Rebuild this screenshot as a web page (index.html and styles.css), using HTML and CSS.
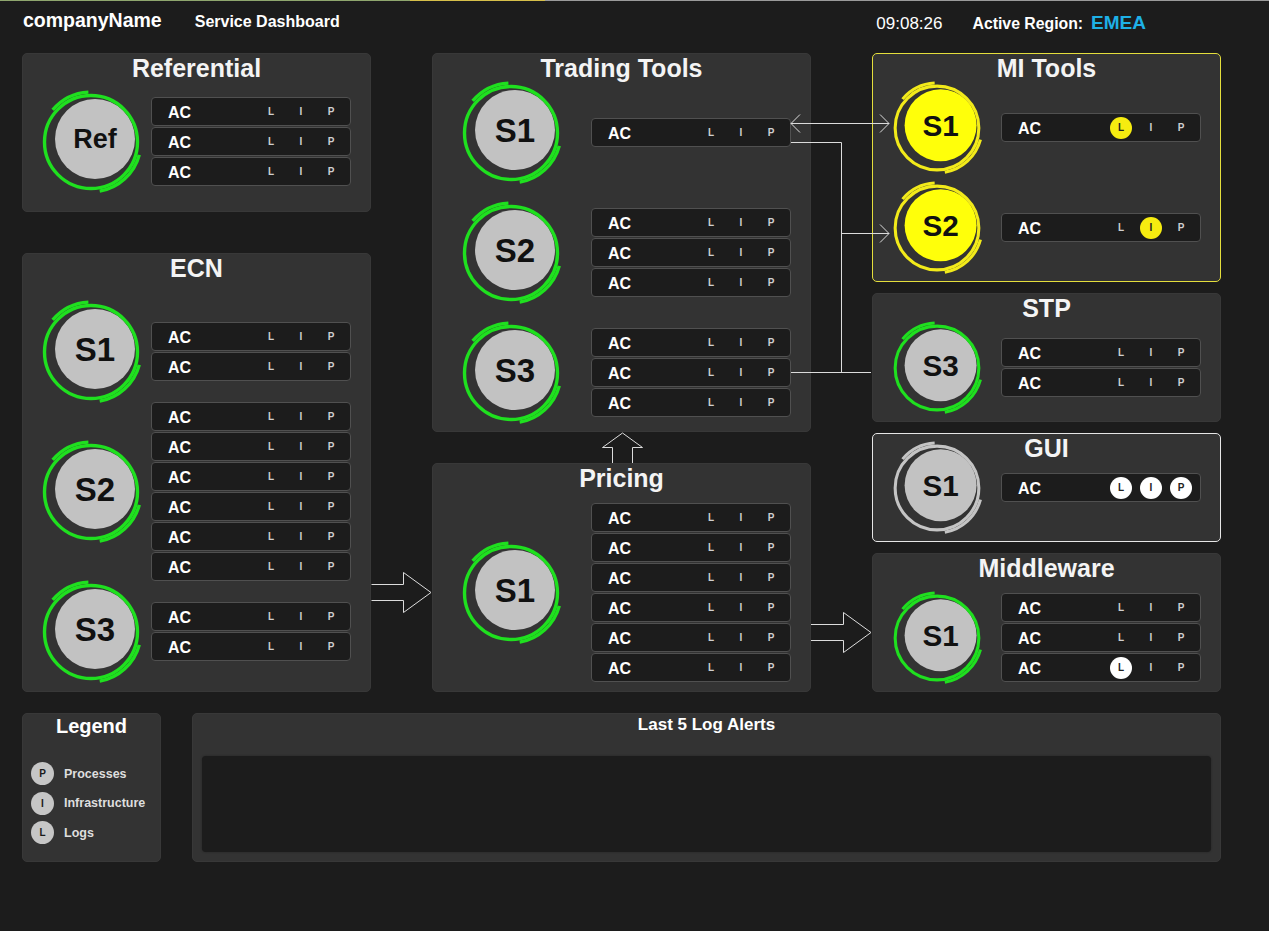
FILE: index.html
```html
<!DOCTYPE html>
<html>
<head>
<meta charset="utf-8">
<title>Service Dashboard</title>
<link rel="stylesheet" href="styles.css">
</head>
<body>
<header class="topbar">
  <div class="left-head">
    <span class="brand">companyName</span>
    <span class="subtitle">Service Dashboard</span>
  </div>
  <div class="right-head">
    <span class="clock">09:08:26</span>
    <span class="region">Active Region:<span class="region-name">EMEA</span></span>
  </div>
</header>

<main class="board">
  <div class="col col-1">
    <section class="panel p-ref">
      <h2 class="ptitle">Referential</h2>
      <div class="svcs">
        <div class="svc">
          <div class="ring-zone"><svg class="ring green lg" viewBox="0 0 100 100"><circle class="core" cx="54" cy="47" r="40"/><circle class="arc" cx="50" cy="50" r="46.5"/><path class="arc" d="M47.4 0.1 A50 50 0 0 0 11.7 17.9"/><path class="arc" d="M98.3 62.9 A50 50 0 0 1 58.7 99.2"/><text class="lbl small" x="54" y="56">Ref</text></svg></div>
          <div class="rows">
            <div class="row"><span class="ac">AC</span><span class="ind">L</span><span class="ind">I</span><span class="ind">P</span></div>
            <div class="row"><span class="ac">AC</span><span class="ind">L</span><span class="ind">I</span><span class="ind">P</span></div>
            <div class="row"><span class="ac">AC</span><span class="ind">L</span><span class="ind">I</span><span class="ind">P</span></div>
          </div>
        </div>
      </div>
    </section>
    <section class="panel p-ecn">
      <h2 class="ptitle">ECN</h2>
      <div class="svcs">
        <div class="svc">
          <div class="ring-zone"><svg class="ring green lg" viewBox="0 0 100 100"><circle class="core" cx="54" cy="47" r="40"/><circle class="arc" cx="50" cy="50" r="46.5"/><path class="arc" d="M47.4 0.1 A50 50 0 0 0 11.7 17.9"/><path class="arc" d="M98.3 62.9 A50 50 0 0 1 58.7 99.2"/><text class="lbl" x="54" y="59">S1</text></svg></div>
          <div class="rows">
            <div class="row"><span class="ac">AC</span><span class="ind">L</span><span class="ind">I</span><span class="ind">P</span></div>
            <div class="row"><span class="ac">AC</span><span class="ind">L</span><span class="ind">I</span><span class="ind">P</span></div>
          </div>
        </div>
        <div class="svc">
          <div class="ring-zone"><svg class="ring green lg" viewBox="0 0 100 100"><circle class="core" cx="54" cy="47" r="40"/><circle class="arc" cx="50" cy="50" r="46.5"/><path class="arc" d="M47.4 0.1 A50 50 0 0 0 11.7 17.9"/><path class="arc" d="M98.3 62.9 A50 50 0 0 1 58.7 99.2"/><text class="lbl" x="54" y="59">S2</text></svg></div>
          <div class="rows">
            <div class="row"><span class="ac">AC</span><span class="ind">L</span><span class="ind">I</span><span class="ind">P</span></div>
            <div class="row"><span class="ac">AC</span><span class="ind">L</span><span class="ind">I</span><span class="ind">P</span></div>
            <div class="row"><span class="ac">AC</span><span class="ind">L</span><span class="ind">I</span><span class="ind">P</span></div>
            <div class="row"><span class="ac">AC</span><span class="ind">L</span><span class="ind">I</span><span class="ind">P</span></div>
            <div class="row"><span class="ac">AC</span><span class="ind">L</span><span class="ind">I</span><span class="ind">P</span></div>
            <div class="row"><span class="ac">AC</span><span class="ind">L</span><span class="ind">I</span><span class="ind">P</span></div>
          </div>
        </div>
        <div class="svc">
          <div class="ring-zone"><svg class="ring green lg" viewBox="0 0 100 100"><circle class="core" cx="54" cy="47" r="40"/><circle class="arc" cx="50" cy="50" r="46.5"/><path class="arc" d="M47.4 0.1 A50 50 0 0 0 11.7 17.9"/><path class="arc" d="M98.3 62.9 A50 50 0 0 1 58.7 99.2"/><text class="lbl" x="54" y="59">S3</text></svg></div>
          <div class="rows">
            <div class="row"><span class="ac">AC</span><span class="ind">L</span><span class="ind">I</span><span class="ind">P</span></div>
            <div class="row"><span class="ac">AC</span><span class="ind">L</span><span class="ind">I</span><span class="ind">P</span></div>
          </div>
        </div>
      </div>
    </section>
  </div>

  <div class="col col-2">
    <section class="panel p-trading">
      <h2 class="ptitle">Trading Tools</h2>
      <div class="svcs">
        <div class="svc">
          <div class="ring-zone"><svg class="ring green lg" viewBox="0 0 100 100"><circle class="core" cx="54" cy="47" r="40"/><circle class="arc" cx="50" cy="50" r="46.5"/><path class="arc" d="M47.4 0.1 A50 50 0 0 0 11.7 17.9"/><path class="arc" d="M98.3 62.9 A50 50 0 0 1 58.7 99.2"/><text class="lbl" x="54" y="59">S1</text></svg></div>
          <div class="rows">
            <div class="row"><span class="ac">AC</span><span class="ind">L</span><span class="ind">I</span><span class="ind">P</span></div>
          </div>
        </div>
        <div class="svc">
          <div class="ring-zone"><svg class="ring green lg" viewBox="0 0 100 100"><circle class="core" cx="54" cy="47" r="40"/><circle class="arc" cx="50" cy="50" r="46.5"/><path class="arc" d="M47.4 0.1 A50 50 0 0 0 11.7 17.9"/><path class="arc" d="M98.3 62.9 A50 50 0 0 1 58.7 99.2"/><text class="lbl" x="54" y="59">S2</text></svg></div>
          <div class="rows">
            <div class="row"><span class="ac">AC</span><span class="ind">L</span><span class="ind">I</span><span class="ind">P</span></div>
            <div class="row"><span class="ac">AC</span><span class="ind">L</span><span class="ind">I</span><span class="ind">P</span></div>
            <div class="row"><span class="ac">AC</span><span class="ind">L</span><span class="ind">I</span><span class="ind">P</span></div>
          </div>
        </div>
        <div class="svc">
          <div class="ring-zone"><svg class="ring green lg" viewBox="0 0 100 100"><circle class="core" cx="54" cy="47" r="40"/><circle class="arc" cx="50" cy="50" r="46.5"/><path class="arc" d="M47.4 0.1 A50 50 0 0 0 11.7 17.9"/><path class="arc" d="M98.3 62.9 A50 50 0 0 1 58.7 99.2"/><text class="lbl" x="54" y="59">S3</text></svg></div>
          <div class="rows">
            <div class="row"><span class="ac">AC</span><span class="ind">L</span><span class="ind">I</span><span class="ind">P</span></div>
            <div class="row"><span class="ac">AC</span><span class="ind">L</span><span class="ind">I</span><span class="ind">P</span></div>
            <div class="row"><span class="ac">AC</span><span class="ind">L</span><span class="ind">I</span><span class="ind">P</span></div>
          </div>
        </div>
      </div>
    </section>
    <section class="panel p-pricing">
      <h2 class="ptitle">Pricing</h2>
      <div class="svcs">
        <div class="svc">
          <div class="ring-zone"><svg class="ring green lg" viewBox="0 0 100 100"><circle class="core" cx="54" cy="47" r="40"/><circle class="arc" cx="50" cy="50" r="46.5"/><path class="arc" d="M47.4 0.1 A50 50 0 0 0 11.7 17.9"/><path class="arc" d="M98.3 62.9 A50 50 0 0 1 58.7 99.2"/><text class="lbl" x="54" y="59">S1</text></svg></div>
          <div class="rows">
            <div class="row"><span class="ac">AC</span><span class="ind">L</span><span class="ind">I</span><span class="ind">P</span></div>
            <div class="row"><span class="ac">AC</span><span class="ind">L</span><span class="ind">I</span><span class="ind">P</span></div>
            <div class="row"><span class="ac">AC</span><span class="ind">L</span><span class="ind">I</span><span class="ind">P</span></div>
            <div class="row"><span class="ac">AC</span><span class="ind">L</span><span class="ind">I</span><span class="ind">P</span></div>
            <div class="row"><span class="ac">AC</span><span class="ind">L</span><span class="ind">I</span><span class="ind">P</span></div>
            <div class="row"><span class="ac">AC</span><span class="ind">L</span><span class="ind">I</span><span class="ind">P</span></div>
          </div>
        </div>
      </div>
    </section>
  </div>

  <div class="col col-3">
    <section class="panel p-mi">
      <h2 class="ptitle">MI Tools</h2>
      <div class="svcs">
        <div class="svc">
          <div class="ring-zone"><svg class="ring yellow sm" viewBox="0 0 100 100"><circle class="core" cx="54" cy="47" r="40"/><circle class="arc" cx="50" cy="50" r="46.5"/><path class="arc" d="M47.4 0.1 A50 50 0 0 0 11.7 17.9"/><path class="arc" d="M98.3 62.9 A50 50 0 0 1 58.7 99.2"/><text class="lbl" x="54" y="59">S1</text></svg></div>
          <div class="rows">
            <div class="row"><span class="ac">AC</span><span class="ind on-yellow">L</span><span class="ind">I</span><span class="ind">P</span></div>
          </div>
        </div>
        <div class="svc">
          <div class="ring-zone"><svg class="ring yellow sm" viewBox="0 0 100 100"><circle class="core" cx="54" cy="47" r="40"/><circle class="arc" cx="50" cy="50" r="46.5"/><path class="arc" d="M47.4 0.1 A50 50 0 0 0 11.7 17.9"/><path class="arc" d="M98.3 62.9 A50 50 0 0 1 58.7 99.2"/><text class="lbl" x="54" y="59">S2</text></svg></div>
          <div class="rows">
            <div class="row"><span class="ac">AC</span><span class="ind">L</span><span class="ind on-yellow">I</span><span class="ind">P</span></div>
          </div>
        </div>
      </div>
    </section>
    <section class="panel p-stp">
      <h2 class="ptitle">STP</h2>
      <div class="svcs">
        <div class="svc">
          <div class="ring-zone"><svg class="ring green sm" viewBox="0 0 100 100"><circle class="core" cx="54" cy="47" r="40"/><circle class="arc" cx="50" cy="50" r="46.5"/><path class="arc" d="M47.4 0.1 A50 50 0 0 0 11.7 17.9"/><path class="arc" d="M98.3 62.9 A50 50 0 0 1 58.7 99.2"/><text class="lbl" x="54" y="59">S3</text></svg></div>
          <div class="rows">
            <div class="row"><span class="ac">AC</span><span class="ind">L</span><span class="ind">I</span><span class="ind">P</span></div>
            <div class="row"><span class="ac">AC</span><span class="ind">L</span><span class="ind">I</span><span class="ind">P</span></div>
          </div>
        </div>
      </div>
    </section>
    <section class="panel p-gui">
      <h2 class="ptitle">GUI</h2>
      <div class="svcs">
        <div class="svc">
          <div class="ring-zone"><svg class="ring grey sm" viewBox="0 0 100 100"><circle class="core" cx="54" cy="47" r="40"/><circle class="arc" cx="50" cy="50" r="46.5"/><path class="arc" d="M47.4 0.1 A50 50 0 0 0 11.7 17.9"/><path class="arc" d="M98.3 62.9 A50 50 0 0 1 58.7 99.2"/><text class="lbl" x="54" y="59">S1</text></svg></div>
          <div class="rows">
            <div class="row"><span class="ac">AC</span><span class="ind on-white">L</span><span class="ind on-white">I</span><span class="ind on-white">P</span></div>
          </div>
        </div>
      </div>
    </section>
    <section class="panel p-mw">
      <h2 class="ptitle">Middleware</h2>
      <div class="svcs">
        <div class="svc">
          <div class="ring-zone"><svg class="ring green sm" viewBox="0 0 100 100"><circle class="core" cx="54" cy="47" r="40"/><circle class="arc" cx="50" cy="50" r="46.5"/><path class="arc" d="M47.4 0.1 A50 50 0 0 0 11.7 17.9"/><path class="arc" d="M98.3 62.9 A50 50 0 0 1 58.7 99.2"/><text class="lbl" x="54" y="59">S1</text></svg></div>
          <div class="rows">
            <div class="row"><span class="ac">AC</span><span class="ind">L</span><span class="ind">I</span><span class="ind">P</span></div>
            <div class="row"><span class="ac">AC</span><span class="ind">L</span><span class="ind">I</span><span class="ind">P</span></div>
            <div class="row"><span class="ac">AC</span><span class="ind on-white">L</span><span class="ind">I</span><span class="ind">P</span></div>
          </div>
        </div>
      </div>
    </section>
  </div>
</main>

<section class="bottom">
  <div class="panel legend">
    <h3 class="ltitle">Legend</h3>
    <ul class="legend-list">
      <li><span class="dot">P</span>Processes</li>
      <li><span class="dot">I</span>Infrastructure</li>
      <li><span class="dot">L</span>Logs</li>
    </ul>
  </div>
  <div class="panel logs">
    <h3 class="logtitle">Last 5 Log Alerts</h3>
    <div class="logbox"></div>
  </div>
</section>

<svg class="links" width="1269" height="931" viewBox="0 0 1269 931">
  <g class="wire">
    <line x1="791" y1="123.5" x2="889" y2="123.5"/>
    <polyline points="800,114.5 791,123.5 800,132.5"/>
    <polyline points="880,114.5 889,123.5 880,132.5"/>
    <polyline points="791,142.5 841.5,142.5 841.5,372.5"/>
    <line x1="791" y1="372.5" x2="871" y2="372.5"/>
    <line x1="841.5" y1="233.5" x2="889" y2="233.5"/>
    <polyline points="880,224.5 889,233.5 880,242.5"/>
    <polyline points="371.5,584.5 403.5,584.5 403.5,572.5 431,592.5 403.5,612.5 403.5,600.5 371.5,600.5"/>
    <polyline points="811,624.5 843.5,624.5 843.5,612.5 871,632.5 843.5,652.5 843.5,640.5 811,640.5"/>
    <polyline points="612.5,463 612.5,447.5 602.5,447.5 622.5,433 642.5,447.5 632.5,447.5 632.5,463"/>
  </g>
</svg>
</body>
</html>
```

FILE: styles.css
```css
* { box-sizing: border-box; }

html, body {
  margin: 0;
  padding: 0;
}

body {
  position: relative;
  width: 1269px;
  height: 931px;
  overflow: hidden;
  background: #1c1c1c;
  color: #ffffff;
  font-family: "Liberation Sans", Arial, sans-serif;
}

/* ---------- header ---------- */
.topbar {
  display: flex;
  justify-content: space-between;
  align-items: flex-start;
  height: 53px;
  padding: 0 123px 0 23px;
  background-image: linear-gradient(to right, #8fa66e 0, #8fa66e 410px, #d6bf4a 410px, #d6bf4a 545px, #9a9a9a 545px, #9a9a9a 100%);
  background-size: 100% 1px;
  background-repeat: no-repeat;
}

.left-head {
  display: flex;
  align-items: baseline;
  padding-top: 9px;
  line-height: 22px;
}

.brand {
  font-size: 19.5px;
  font-weight: bold;
}

.subtitle {
  margin-left: 33px;
  font-size: 16px;
  font-weight: bold;
}

.right-head {
  display: flex;
  align-items: baseline;
  padding-top: 12px;
  line-height: 22px;
}

.clock {
  font-size: 17px;
}

.region {
  margin-left: 30px;
  font-size: 15.8px;
  font-weight: bold;
}

.region-name {
  margin-left: 8px;
  font-size: 19px;
  color: #1eb0e6;
}

/* ---------- board ---------- */
.board {
  display: grid;
  grid-template-columns: 349px 379px 349px;
  column-gap: 61px;
  padding-left: 22px;
  height: 639px;
}

.col {
  display: flex;
  flex-direction: column;
}

.col-1 { gap: 41px; }
.col-2 { gap: 31px; }
.col-3 { gap: 11px; }

.panel {
  background: #333333;
  border: 1px solid #383838;
  border-radius: 5px;
}

.p-ref { height: 159px; }
.p-ecn { height: 439px; }
.p-trading { height: 379px; }
.p-pricing { height: 229px; }
.p-mi { height: 229px; border-color: #e4de3c; }
.p-stp { height: 129px; }
.p-gui { height: 109px; border-color: #e6e6e6; }
.p-mw { height: 139px; }

.ptitle {
  margin: 0;
  height: 29px;
  line-height: 29px;
  text-align: center;
  font-size: 25px;
  font-weight: bold;
  color: #f4f4f4;
}

.svcs {
  display: flex;
  flex-direction: column;
  padding-right: 19px;
}

.p-ref .svcs { margin-top: 9px; }
.p-ecn .svcs { margin-top: 19px; }
.p-trading .svcs { gap: 20px; }
.p-pricing .svcs { margin-top: 10px; }
.p-mi .svcs { gap: 10px; }
.p-gui .svcs { margin-top: -20px; }
.p-mw .svcs { margin-top: 10px; }

.svc {
  display: flex;
  align-items: center;
}

.ring-zone {
  flex: 1;
  display: flex;
  justify-content: center;
  align-items: center;
}

.col-1 .ring-zone { padding-left: 7px; }
.col-2 .ring-zone { padding-right: 3px; }

.ring {
  display: block;
  overflow: visible;
}

.ring.lg { width: 100px; height: 100px; }
.ring.sm { width: 90px; height: 90px; }

.ring .arc {
  fill: none;
  stroke-width: 3.4;
}

.ring .core { fill: #c2c2c2; }

.ring.green .arc { stroke: #1fe01f; }
.ring.yellow .arc { stroke: #f2ea1a; }
.ring.yellow .core { fill: #ffff0a; }
.ring.grey .arc { stroke: #c4c4c4; }

.ring .lbl {
  font-family: "Liberation Sans", Arial, sans-serif;
  font-size: 33px;
  font-weight: bold;
  fill: #111111;
  text-anchor: middle;
}

.ring .lbl.small { font-size: 27px; }

/* ---------- rows ---------- */
.rows {
  width: 200px;
  display: flex;
  flex-direction: column;
}

.row {
  display: flex;
  align-items: center;
  height: 29px;
  margin-bottom: 1px;
  padding: 0 8px 0 16px;
  background: #1c1c1c;
  border: 1px solid #505050;
  border-radius: 4px;
  gap: 8px;
}

.ac {
  flex: 1;
  font-size: 16px;
  font-weight: bold;
  color: #ffffff;
  padding-top: 2px;
}

.ind {
  width: 22px;
  height: 22px;
  border-radius: 50%;
  display: flex;
  align-items: center;
  justify-content: center;
  font-size: 10px;
  font-weight: bold;
  color: #cfcfcf;
}

.ind.on-yellow { background: #f6ec10; color: #222; }
.ind.on-white { background: #ffffff; color: #222; }

/* ---------- bottom ---------- */
.bottom {
  display: flex;
  gap: 31px;
  padding-left: 22px;
  margin-top: 21px;
}

.legend {
  width: 139px;
  height: 149px;
  padding-left: 8px;
}

.ltitle {
  margin: 0 0 0 -8px;
  height: 24px;
  line-height: 24px;
  text-align: center;
  font-size: 20px;
  font-weight: bold;
}

.legend-list {
  list-style: none;
  margin: 21px 0 0;
  padding: 0;
}

.legend-list li {
  display: flex;
  align-items: center;
  height: 29.5px;
  font-size: 12.5px;
  font-weight: bold;
  color: #dedede;
}

.dot {
  width: 23px;
  height: 23px;
  margin-right: 10px;
  border-radius: 50%;
  background: #c6c6c6;
  color: #1a1a1a;
  font-size: 10px;
  display: flex;
  align-items: center;
  justify-content: center;
}

.logs {
  width: 1029px;
  height: 149px;
  padding: 0 9px 9px;
  display: flex;
  flex-direction: column;
}

.logtitle {
  margin: 0;
  height: 22px;
  line-height: 22px;
  text-align: center;
  font-size: 17px;
  font-weight: bold;
}

.logbox {
  margin-top: 20px;
  flex: 1;
  background: #1c1c1c;
  border-radius: 4px;
  box-shadow: 0 0 2px #222;
}

/* ---------- connectors ---------- */
.links {
  position: absolute;
  left: 0;
  top: 0;
  pointer-events: none;
}

.wire line,
.wire polyline {
  fill: none;
  stroke: #dcdcdc;
  stroke-width: 1;
}
```
